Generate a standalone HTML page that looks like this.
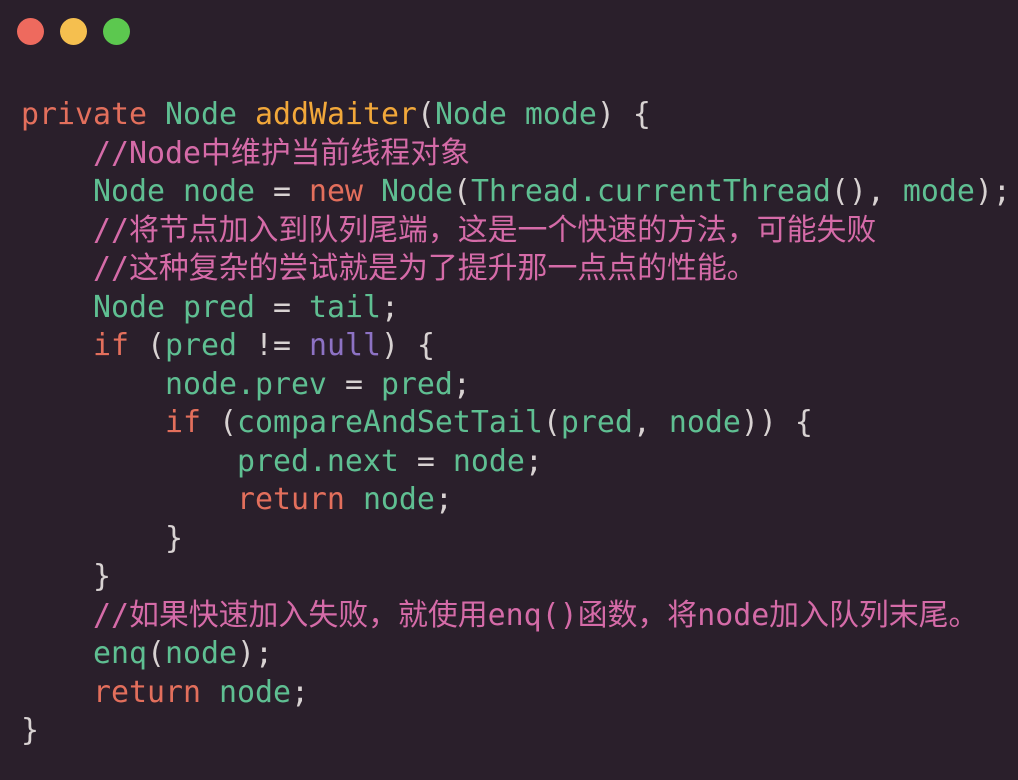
<!DOCTYPE html>
<html><head><meta charset="utf-8"><style>
html,body{margin:0;padding:0;width:1018px;height:780px;overflow:hidden;background:#2a1f2b;}
.dot{position:absolute;top:18px;width:27px;height:27px;border-radius:50%;}
pre{position:absolute;left:21px;top:96px;margin:0;font-family:"DejaVu Sans Mono","Liberation Mono","Noto Sans CJK SC",monospace;font-size:29.9px;line-height:38.5px;color:#cfc8c8;}
.k{color:#e36f5c}.t{color:#5fbf92}.f{color:#f2a83a}.c{color:#d56ba8}.n{color:#8d72c4}.p{color:#d8d2d2}
.c{font-family:"DejaVu Sans Mono","Noto Sans CJK SC",monospace;}
</style></head><body>
<div class="dot" style="left:17px;background:#ee6a5e"></div>
<div class="dot" style="left:60px;background:#f5bf4f"></div>
<div class="dot" style="left:103px;background:#5cc84f"></div>
<pre><span class="k">private</span> <span class="t">Node</span> <span class="f">addWaiter</span><span class="p">(</span><span class="t">Node mode</span><span class="p">) {</span>
    <span class="c">//Node中维护当前线程对象</span>
    <span class="t">Node node</span> <span class="p">=</span> <span class="k">new</span> <span class="t">Node</span><span class="p">(</span><span class="t">Thread.currentThread</span><span class="p">(),</span> <span class="t">mode</span><span class="p">);</span>
    <span class="c">//将节点加入到队列尾端，这是一个快速的方法，可能失败</span>
    <span class="c">//这种复杂的尝试就是为了提升那一点点的性能。</span>
    <span class="t">Node pred</span> <span class="p">=</span> <span class="t">tail</span><span class="p">;</span>
    <span class="k">if</span> <span class="p">(</span><span class="t">pred</span> <span class="p">!=</span> <span class="n">null</span><span class="p">) {</span>
        <span class="t">node.prev</span> <span class="p">=</span> <span class="t">pred</span><span class="p">;</span>
        <span class="k">if</span> <span class="p">(</span><span class="t">compareAndSetTail</span><span class="p">(</span><span class="t">pred</span><span class="p">,</span> <span class="t">node</span><span class="p">)) {</span>
            <span class="t">pred.next</span> <span class="p">=</span> <span class="t">node</span><span class="p">;</span>
            <span class="k">return</span> <span class="t">node</span><span class="p">;</span>
        <span class="p">}</span>
    <span class="p">}</span>
    <span class="c">//如果快速加入失败，就使用enq()函数，将node加入队列末尾。</span>
    <span class="t">enq</span><span class="p">(</span><span class="t">node</span><span class="p">);</span>
    <span class="k">return</span> <span class="t">node</span><span class="p">;</span>
<span class="p">}</span></pre>
</body></html>
